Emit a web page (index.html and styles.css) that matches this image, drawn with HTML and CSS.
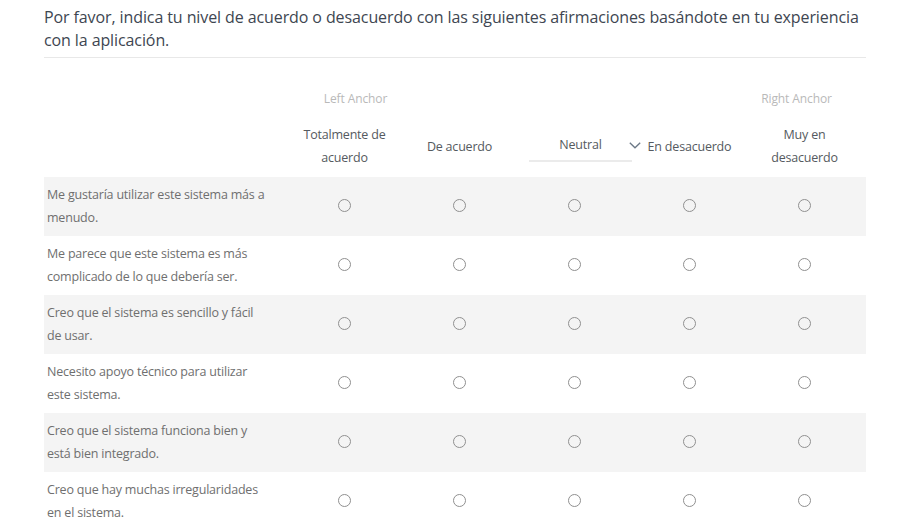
FILE: index.html
```html
<!DOCTYPE html>
<html lang="es">
<head>
<meta charset="utf-8">
<link rel="stylesheet" href="styles.css">
</head>
<body>
<div class="survey">
  <h1 class="question">Por favor, indica tu nivel de acuerdo o desacuerdo con las siguientes afirmaciones basándote en tu experiencia con la aplicación.</h1>
  <div class="matrix">
    <div class="anchors">
      <div></div>
      <div class="anchor anchor-left">Left Anchor</div>
      <div></div><div></div><div></div>
      <div class="anchor anchor-right">Right Anchor</div>
    </div>
    <div class="head">
      <div></div>
      <div class="hcell">Totalmente de<br>acuerdo</div>
      <div class="hcell">De acuerdo</div>
      <div class="hcell neutral"><span class="neutral-inner">Neutral</span>
        <svg class="chev" width="12" height="7" viewBox="0 0 12 7"><path d="M0.8 0.8 L6 5.8 L11.2 0.8" fill="none" stroke="#6b7886" stroke-width="1.3"/></svg>
      </div>
      <div class="hcell">En desacuerdo</div>
      <div class="hcell">Muy en<br>desacuerdo</div>
    </div>
    <div class="row alt">
      <div class="label">Me gustaría utilizar este sistema más a<br>menudo.</div>
      <div class="cell"><span class="radio"></span></div><div class="cell"><span class="radio"></span></div><div class="cell"><span class="radio"></span></div><div class="cell"><span class="radio"></span></div><div class="cell"><span class="radio"></span></div>
    </div>
    <div class="row">
      <div class="label">Me parece que este sistema es más<br>complicado de lo que debería ser.</div>
      <div class="cell"><span class="radio"></span></div><div class="cell"><span class="radio"></span></div><div class="cell"><span class="radio"></span></div><div class="cell"><span class="radio"></span></div><div class="cell"><span class="radio"></span></div>
    </div>
    <div class="row alt">
      <div class="label">Creo que el sistema es sencillo y fácil<br>de usar.</div>
      <div class="cell"><span class="radio"></span></div><div class="cell"><span class="radio"></span></div><div class="cell"><span class="radio"></span></div><div class="cell"><span class="radio"></span></div><div class="cell"><span class="radio"></span></div>
    </div>
    <div class="row">
      <div class="label">Necesito apoyo técnico para utilizar<br>este sistema.</div>
      <div class="cell"><span class="radio"></span></div><div class="cell"><span class="radio"></span></div><div class="cell"><span class="radio"></span></div><div class="cell"><span class="radio"></span></div><div class="cell"><span class="radio"></span></div>
    </div>
    <div class="row alt">
      <div class="label">Creo que el sistema funciona bien y<br>está bien integrado.</div>
      <div class="cell"><span class="radio"></span></div><div class="cell"><span class="radio"></span></div><div class="cell"><span class="radio"></span></div><div class="cell"><span class="radio"></span></div><div class="cell"><span class="radio"></span></div>
    </div>
    <div class="row">
      <div class="label">Creo que hay muchas irregularidades<br>en el sistema.</div>
      <div class="cell"><span class="radio"></span></div><div class="cell"><span class="radio"></span></div><div class="cell"><span class="radio"></span></div><div class="cell"><span class="radio"></span></div><div class="cell"><span class="radio"></span></div>
    </div>
  </div>
</div>
</body>
</html>
```

FILE: styles.css
```css
html, body {
  margin: 0;
  padding: 0;
  background: #ffffff;
  font-family: "Open Sans", "Noto Sans", sans-serif;
  overflow: hidden;
}
.survey {
  margin-left: 44px;
  width: 822px;
}
.question {
  margin: 0;
  padding: 6px 0 5px 0;
  font-size: 16px;
  font-weight: 400;
  line-height: 23px;
  letter-spacing: -0.1px;
  color: #3e4651;
  border-bottom: 1px solid #e8e8e8;
}
.anchors, .head, .row {
  display: grid;
  grid-template-columns: 243px repeat(5, 115px) 1fr;
}
.anchors {
  padding-top: 29px;
  padding-bottom: 5px;
  height: 23px;
  line-height: 23px;
}
.anchor {
  font-size: 12px;
  color: #b9b9b9;
  text-align: center;
  letter-spacing: -0.1px;
}
.anchor-left { padding-left: 22px; }
.anchor-right { padding-right: 16px; }
.head {
  height: 62px;
  align-items: center;
}
.hcell {
  text-align: center;
  font-size: 12.5px;
  letter-spacing: -0.2px;
  line-height: 23px;
  color: #555a60;
}
.neutral {
  position: relative;
  height: 100%;
  display: flex;
  align-items: center;
  justify-content: flex-end;
}
.neutral-inner {
  box-sizing: border-box;
  width: 103px;
  margin-top: 2px;
  padding-bottom: 4px;
  text-align: center;
  border-bottom: 2px solid #ebebeb;
}
.chev {
  position: absolute;
  right: -9px;
  top: 27px;
}
.row {
  height: 59px;
  align-items: center;
}
.row.alt {
  background: #f4f4f4;
}
.label {
  padding-left: 3px;
  font-size: 12.5px;
  letter-spacing: -0.2px;
  line-height: 23px;
  color: #6f6f6f;
  padding-bottom: 1px;
}
.cell {
  display: flex;
  justify-content: center;
  align-items: center;
}
.radio {
  box-sizing: border-box;
  width: 13px;
  height: 13px;
  border: 1px solid #909090;
  border-radius: 50%;
  background: transparent;
  margin-bottom: 2px;
}
```
